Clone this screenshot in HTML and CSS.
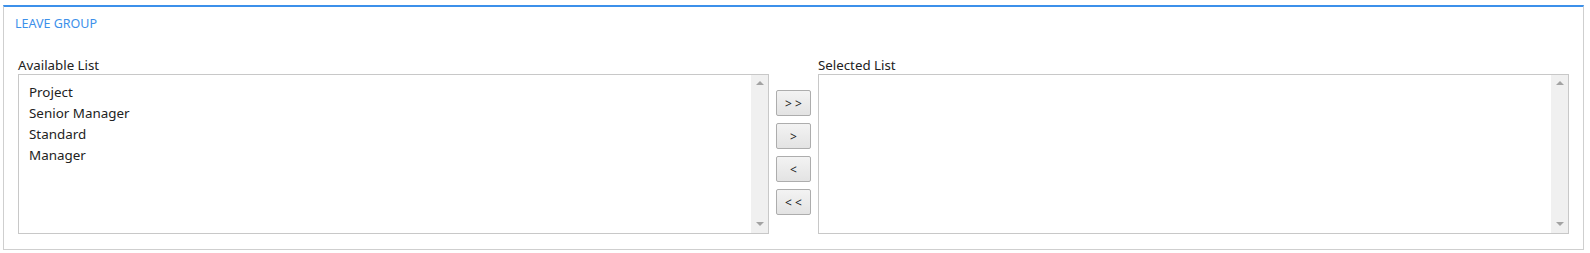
FILE: index.html
```html
<!DOCTYPE html>
<html lang="en">
<head>
  <meta charset="UTF-8" />
  <title>Leave Group</title>
  <link rel="stylesheet" href="styles.css">
</head>
<body>

  <div class="panel">
    <div class="panel-title">LEAVE GROUP</div>

    <div class="picker">
      <div class="picker-col">
        <div class="list-label">Available List</div>
        <div class="list-box">
          <ul class="list-items">
            <li>Project</li>
            <li>Senior Manager</li>
            <li>Standard</li>
            <li>Manager</li>
          </ul>
          <div class="scrollbar">
            <span class="arrow-up"></span>
            <span class="arrow-down"></span>
          </div>
        </div>
      </div>

      <div class="move-buttons">
        <button class="move-button">&gt; &gt;</button>
        <button class="move-button">&gt;</button>
        <button class="move-button">&lt;</button>
        <button class="move-button">&lt; &lt;</button>
      </div>

      <div class="picker-col">
        <div class="list-label">Selected List</div>
        <div class="list-box">
          <ul class="list-items"></ul>
          <div class="scrollbar">
            <span class="arrow-up"></span>
            <span class="arrow-down"></span>
          </div>
        </div>
      </div>
    </div>
  </div>

</body>
</html>
```

FILE: styles.css
```css
body {
  font-family: "Noto Sans", "Open Sans", Arial, sans-serif;
  background-color: #fff;
  margin: 0;
  color: #222;
}

.panel {
  margin: 5px 6px 3px 3px;
  border: 1px solid #cfcfcf;
  border-top: 2px solid #3c90ea;
  padding: 9px 14px 15px 14px;
}

.panel-title {
  font-size: 12.5px;
  line-height: 16px;
  color: #3c90ea;
  margin-left: -3px;
}

.picker {
  display: grid;
  grid-template-columns: 1fr 35px 1fr;
  column-gap: 7px;
  margin-top: 25px;
}

.list-label {
  font-size: 13.3px;
  line-height: 16px;
  margin-bottom: 1px;
}

.list-box {
  display: flex;
  height: 158px;
  border: 1px solid #c8c8c8;
  background-color: #fff;
}

.list-items {
  flex: 1;
  list-style: none;
  margin: 0;
  padding: 7px 10px;
  font-size: 13.4px;
  line-height: 21px;
}

.scrollbar {
  width: 17px;
  background-color: #f0f0f0;
  display: flex;
  flex-direction: column;
  justify-content: space-between;
  align-items: center;
  padding: 6px 0 7px 0;
}

.arrow-up {
  width: 0;
  height: 0;
  border-left: 4px solid transparent;
  border-right: 4px solid transparent;
  border-bottom: 4px solid #a3a3a3;
}

.arrow-down {
  width: 0;
  height: 0;
  border-left: 4px solid transparent;
  border-right: 4px solid transparent;
  border-top: 4px solid #a3a3a3;
}

.move-buttons {
  display: flex;
  flex-direction: column;
  gap: 7px;
  padding-top: 33px;
}

.move-button {
  height: 26px;
  padding: 0;
  font-family: "Noto Sans", Arial, sans-serif;
  font-size: 12px;
  color: #222;
  background: linear-gradient(#f3f3f3, #e3e3e3);
  border: 1px solid #adadad;
  border-radius: 2px;
  cursor: pointer;
}

.move-button:hover {
  background: linear-gradient(#e8f2fc, #d6e8fa);
}
```
